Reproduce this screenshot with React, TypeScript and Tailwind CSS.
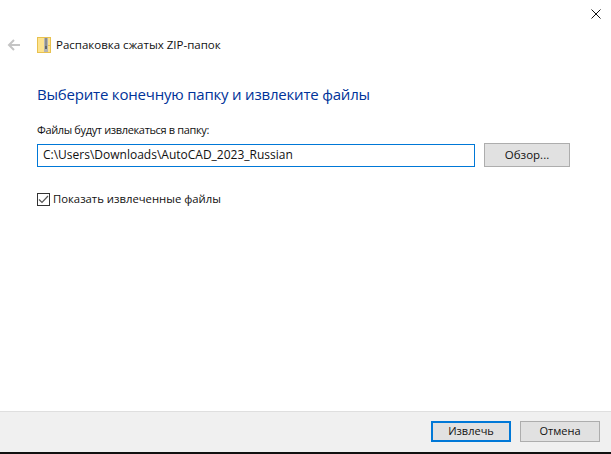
export default function App() {
  return (
    <div className="w-[611px] h-[454px] bg-white flex flex-col overflow-hidden text-[12px] text-[#111] font-['Open_Sans','Noto_Sans',sans-serif]">
      <div className="h-[33px] flex justify-end items-start shrink-0">
        <svg width="10" height="10" viewBox="0 0 10 10" className="mt-[9px] mr-[10px]" fill="none" stroke="#111" strokeWidth="1">
          <path d="M0.5 0.5L9.5 9.5M9.5 0.5L0.5 9.5" />
        </svg>
      </div>
      <div className="h-[24px] flex items-center shrink-0">
        <svg width="13" height="12" viewBox="0 0 13 12" className="ml-[7px]" fill="none" stroke="#c4c4c4" strokeWidth="2">
          <path d="M13 6H2M7 1L2 6L7 11" />
        </svg>
        <svg width="14" height="16" viewBox="0 0 14 16" className="ml-[17px]">
          <rect x="0.5" y="0.5" width="13" height="15" fill="#fde38f" stroke="#e8c14f" />
          <rect x="7" y="1" width="4" height="14" fill="#b5b5b5" />
          <path d="M8 2h2M8 4h2M8 6h2M8 8h2" stroke="#666" strokeWidth="1" />
          <rect x="8" y="9" width="2" height="3" fill="#666" />
          <path d="M11 8.5h2.5" stroke="#e8c14f" />
        </svg>
        <span className="ml-[5px] text-[11.5px]">Распаковка сжатых ZIP-папок</span>
      </div>
      <div className="flex-1 flex flex-col pl-[37px]">
        <h1 className="mt-[26px] text-[15px] tracking-[-0.2px] leading-[22px] font-normal text-[#003399]">
          Выберите конечную папку и извлеките файлы
        </h1>
        <label className="mt-[16px] leading-[18px] text-[11px] tracking-[-0.35px]">Файлы будут извлекаться в папку:</label>
        <div className="mt-[4px] flex items-center">
          <div className="w-[438px] h-[23px] border border-[#0078d7] flex items-center pl-[5px]">
            C:\Users\Downloads\AutoCAD_2023_Russian
          </div>
          <button className="ml-[9px] w-[86px] h-[24px] bg-[#e1e1e1] border border-[#adadad] flex items-center justify-center text-[11.5px]">
            Обзор...
          </button>
        </div>
        <div className="mt-[24px] flex items-center">
          <span className="w-[13px] h-[13px] border border-[#333] flex items-center justify-center">
            <svg width="11" height="9" viewBox="0 0 11 9" fill="none" stroke="#555" strokeWidth="1.2">
              <path d="M1 4.5L4 7.5L10 1" />
            </svg>
          </span>
          <span className="ml-[3px] text-[11.3px]">Показать извлеченные файлы</span>
        </div>
      </div>
      <div className="h-[43px] shrink-0 bg-[#f0f0f0] border-t border-[#dfdfdf] border-b-2 border-b-[#111] flex items-start justify-end pt-[9px] pr-[11px] gap-[9px] text-[11px]">
        <button className="w-[80px] h-[21px] bg-[#e1e1e1] border-2 border-[#0078d7] flex items-center justify-center">
          Извлечь
        </button>
        <button className="w-[80px] h-[21px] bg-[#e1e1e1] border border-[#adadad] flex items-center justify-center">
          Отмена
        </button>
      </div>
    </div>
  );
}
